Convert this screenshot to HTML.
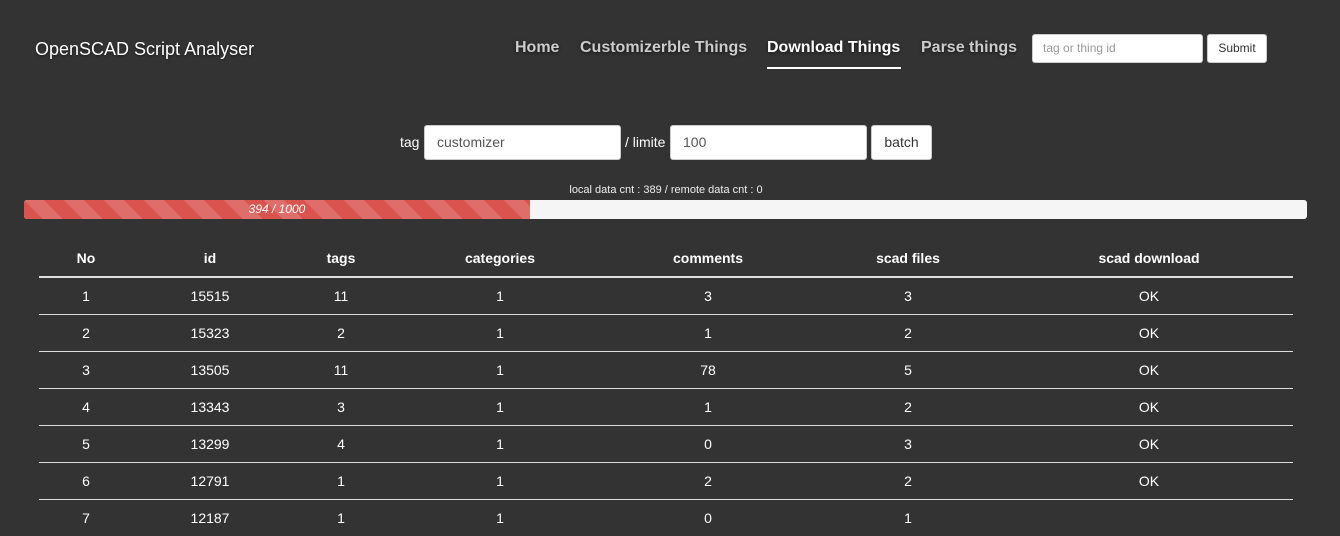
<!DOCTYPE html>
<html><head><style>
body{margin:0;background:#333;width:1340px;height:531px;overflow:hidden;font-family:"Liberation Sans",sans-serif;color:#fff;position:relative}
.a{position:absolute}
.brand{left:35px;top:39px;font-size:18px;color:#fff;text-shadow:0 1px 2px rgba(0,0,0,.5)}
.nav{top:39px;font-size:16px;font-weight:bold;color:#ccc;text-shadow:0 1px 3px rgba(0,0,0,.6)}
input,.btn{box-sizing:border-box;position:absolute;background:#fff;border:1px solid #ccc;border-radius:3px;font-family:"Liberation Sans",sans-serif}
.ph{color:#999;font-size:12px;padding-left:10px;line-height:26px}
.btn{color:#333;text-align:center}
table{position:absolute;left:39px;top:239px;border-collapse:collapse;width:1254px;font-size:14px}
th{height:37px;border-bottom:2px solid #ddd;font-weight:bold;padding:0}
td{height:36px;border-top:1px solid #ddd;text-align:center;padding:0}
</style></head><body>
<div class="a brand">OpenSCAD Script Analyser</div>
<div class="a nav" style="left:515px">Home</div>
<div class="a nav" style="left:580px">Customizerble Things</div>
<div class="a nav" style="left:767px;color:#fff">Download Things</div>
<div class="a" style="left:767px;top:67px;width:134px;height:2px;background:#fff"></div>
<div class="a nav" style="left:921px">Parse things</div>
<div class="a btn ph" style="left:1032px;top:34px;width:171px;height:29px;text-align:left;color:#999">tag or thing id</div>
<div class="a btn" style="left:1207px;top:34px;width:60px;height:29px;font-size:12px;line-height:27px">Submit</div>
<div class="a" style="left:400px;top:134px;font-size:14px">tag</div>
<div class="a btn" style="left:424px;top:125px;width:197px;height:35px;text-align:left;padding-left:12px;line-height:33px;font-size:14px;color:#555">customizer</div>
<div class="a" style="left:625px;top:134px;font-size:14px">/ limite</div>
<div class="a btn" style="left:670px;top:125px;width:197px;height:35px;text-align:left;padding-left:12px;line-height:33px;font-size:14px;color:#555">100</div>
<div class="a btn" style="left:871px;top:125px;width:61px;height:35px;line-height:33px;font-size:14px">batch</div>
<div class="a" style="left:0;width:1332px;text-align:center;top:184px;font-size:11px;color:#eee">local data cnt : 389 / remote data cnt : 0</div>
<div class="a" style="left:24px;top:200px;width:1283px;height:19px;background:#f5f5f5;border-radius:3px;overflow:hidden">
<div style="width:506px;height:19px;background-color:#d9534f;background-image:linear-gradient(45deg,rgba(255,255,255,.15) 25%,transparent 25%,transparent 50%,rgba(255,255,255,.15) 50%,rgba(255,255,255,.15) 75%,transparent 75%,transparent);background-size:40px 40px;text-align:center;font-size:12px;font-style:italic;line-height:19px;color:#fff">394 / 1000</div></div>
<table>
<colgroup><col style="width:94px"><col style="width:154px"><col style="width:108px"><col style="width:210px"><col style="width:206px"><col style="width:194px"><col style="width:288px"></colgroup>
<tr><th>No</th><th>id</th><th>tags</th><th>categories</th><th>comments</th><th>scad files</th><th>scad download</th></tr>
<tr><td>1</td><td>15515</td><td>11</td><td>1</td><td>3</td><td>3</td><td>OK</td></tr>
<tr><td>2</td><td>15323</td><td>2</td><td>1</td><td>1</td><td>2</td><td>OK</td></tr>
<tr><td>3</td><td>13505</td><td>11</td><td>1</td><td>78</td><td>5</td><td>OK</td></tr>
<tr><td>4</td><td>13343</td><td>3</td><td>1</td><td>1</td><td>2</td><td>OK</td></tr>
<tr><td>5</td><td>13299</td><td>4</td><td>1</td><td>0</td><td>3</td><td>OK</td></tr>
<tr><td>6</td><td>12791</td><td>1</td><td>1</td><td>2</td><td>2</td><td>OK</td></tr>
<tr><td>7</td><td>12187</td><td>1</td><td>1</td><td>0</td><td>1</td><td></td></tr>
</table>
</body></html>
